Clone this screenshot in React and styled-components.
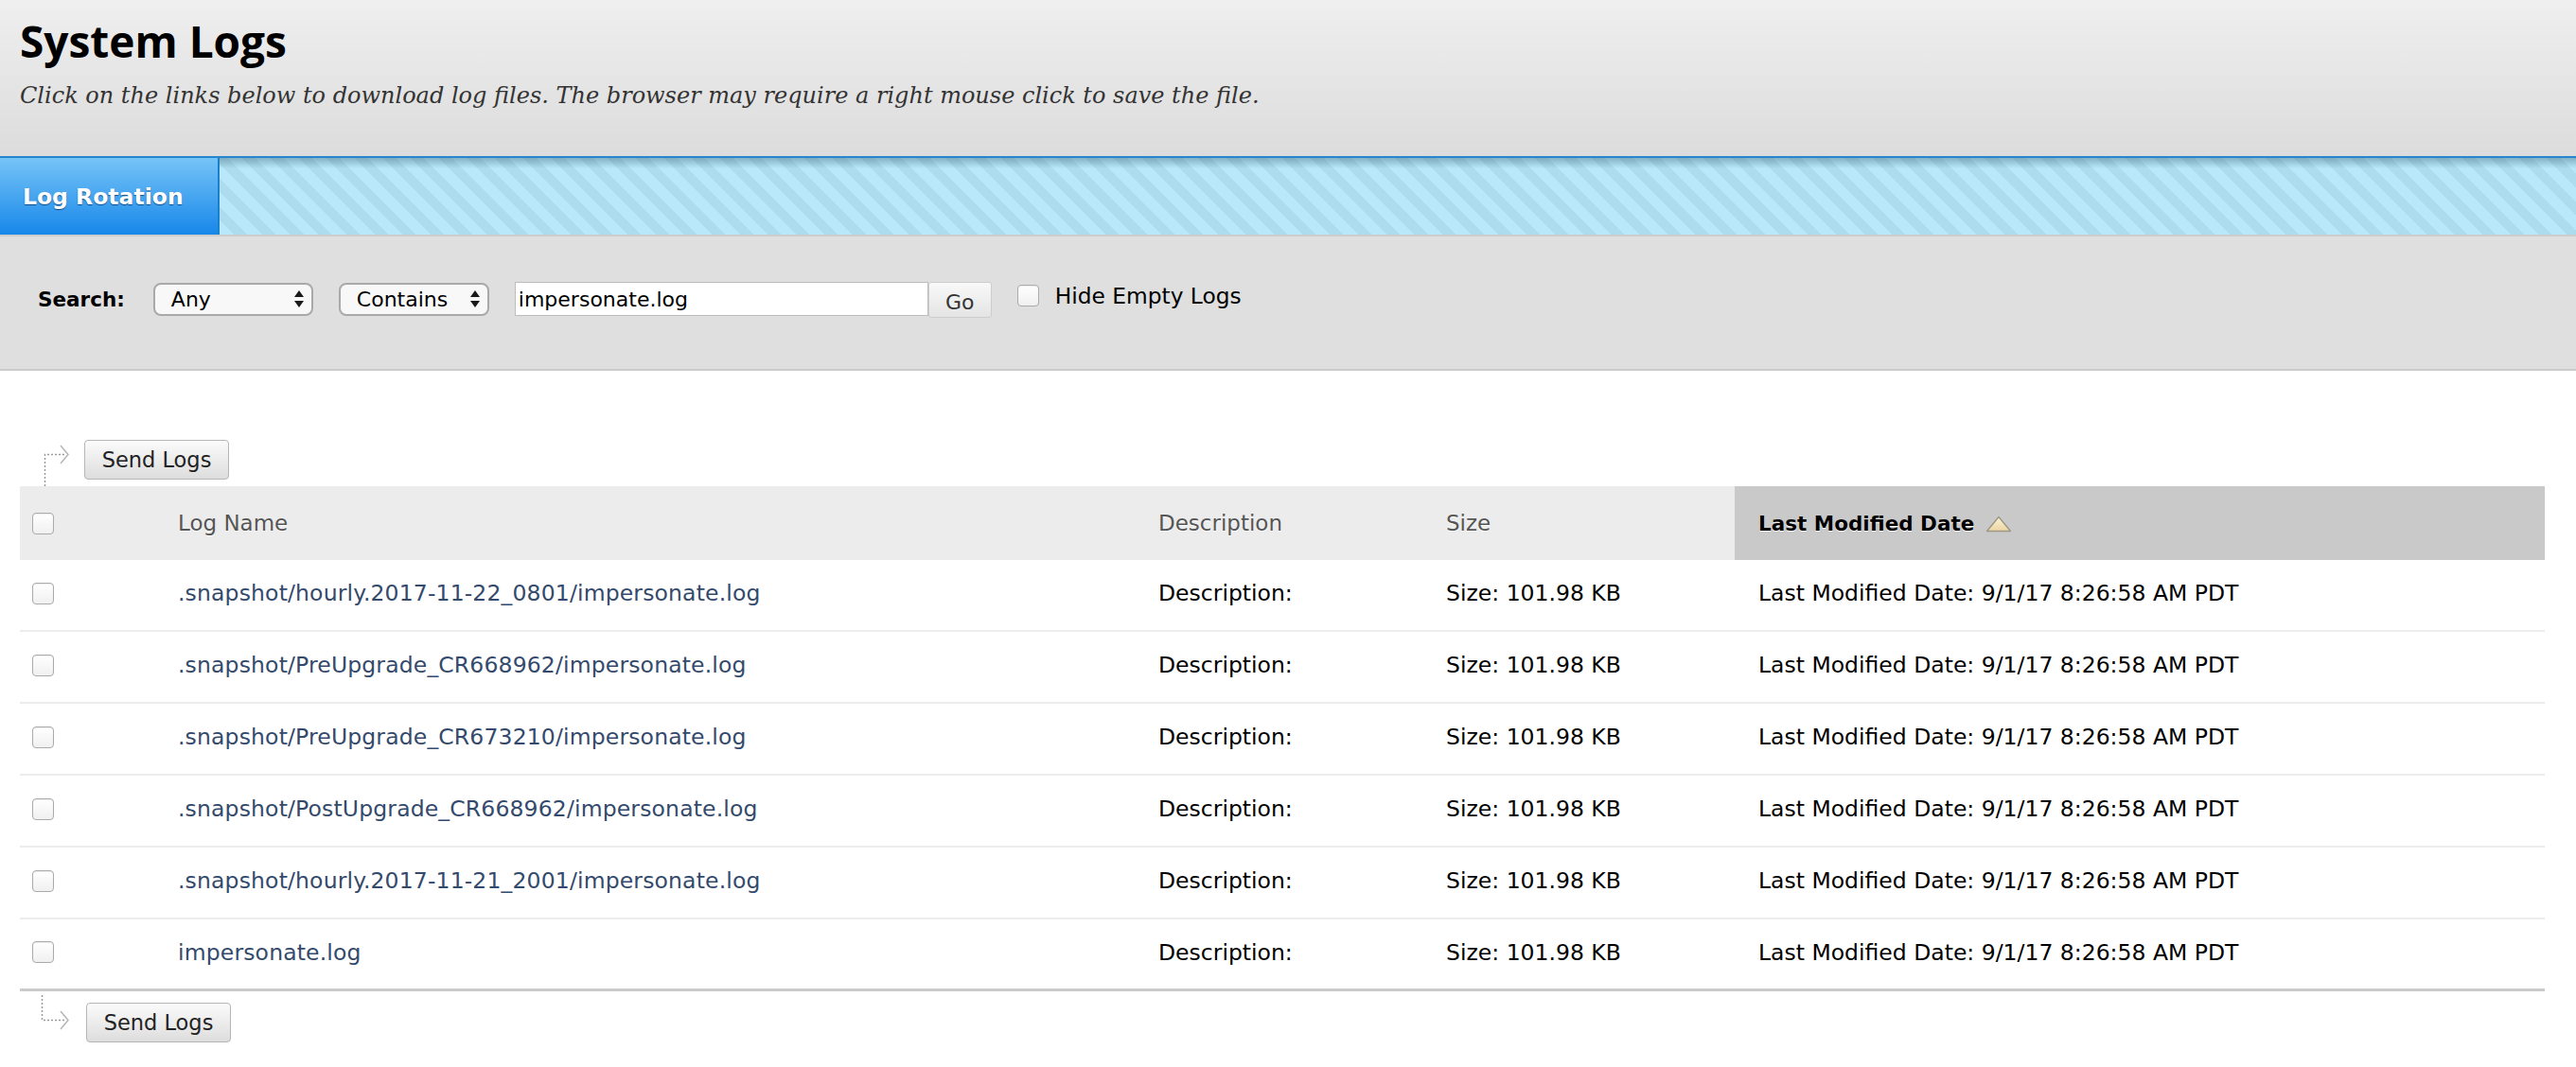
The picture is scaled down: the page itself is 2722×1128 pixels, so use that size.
import React from 'react';
import styled, {createGlobalStyle} from 'styled-components';

const GlobalStyle = createGlobalStyle`
  html, body {
    margin: 0;
    padding: 0;
    background: #fff;
    font-family: "DejaVu Sans", "Open Sans", sans-serif;
    color: #000;
  }
`;

const logs = [
  '.snapshot/hourly.2017-11-22_0801/impersonate.log',
  '.snapshot/PreUpgrade_CR668962/impersonate.log',
  '.snapshot/PreUpgrade_CR673210/impersonate.log',
  '.snapshot/PostUpgrade_CR668962/impersonate.log',
  '.snapshot/hourly.2017-11-21_2001/impersonate.log',
  'impersonate.log',
];

const columns = '167px 1036px 304px 305px 1fr';

const Page = styled.div`
  width: 100%;
`;

const PageHeader = styled.div`
  height: 165px;
  box-sizing: border-box;
  padding: 15px 21px 0;
  background: linear-gradient(#efefef, #dcdcdc);
`;

const Title = styled.h1`
  margin: 0;
  font-family: "Open Sans", sans-serif;
  font-size: 46px;
  line-height: 56px;
  font-weight: 700;
  color: #000;
`;

const Subtitle = styled.p`
  margin: 15px 0 0;
  font-family: "DejaVu Serif", "Liberation Serif", serif;
  font-style: italic;
  font-size: 24px;
  line-height: 30px;
  color: #333;
`;

const TabBar = styled.div`
  display: flex;
  height: 85px;
  box-sizing: border-box;
  border-top: 2px solid #2586cf;
  border-bottom: 2px solid #cdcdcd;
`;

const Tab = styled.div`
  width: 232px;
  display: flex;
  align-items: center;
  padding-left: 24px;
  box-sizing: border-box;
  border-right: 2px solid #1b7fc9;
  background: linear-gradient(#76c4f7, #1787e9);
  color: #fff;
  font-weight: 700;
  font-size: 23.5px;
  text-shadow: 0 1px 1px rgba(0, 40, 90, 0.7);
`;

const TabFill = styled.div`
  flex: 1;
  background:
    linear-gradient(rgba(40, 80, 100, 0.35), rgba(40, 80, 100, 0) 11px),
    repeating-linear-gradient(45deg, #b8e8f9 0 11px, #acdced 11px 21px);
`;

const SearchBar = styled.div`
  height: 142px;
  box-sizing: border-box;
  display: flex;
  align-items: center;
  padding: 0 0 8px 40px;
  background: #dfdfdf;
  border-bottom: 2px solid #cbcbcb;
`;

const SearchLabel = styled.span`
  font-weight: 700;
  font-size: 21.5px;
  margin-right: 30px;
`;

const FakeSelect = styled.div`
  display: flex;
  align-items: center;
  justify-content: space-between;
  width: ${(props) => props.width}px;
  height: 35px;
  box-sizing: border-box;
  padding: 0 8px 0 17px;
  margin-right: ${(props) => props.gap || 0}px;
  border: 2px solid #a9a9a9;
  border-radius: 8px;
  background: #f8f8f8;
  font-size: 22px;
`;

const SearchInput = styled.input`
  width: 437px;
  height: 36px;
  box-sizing: border-box;
  padding: 0 3px;
  border: 1px solid #bdbdbd;
  background: #fff;
  font-family: inherit;
  font-size: 22px;
  color: #000;
  outline: none;
`;

const GoButton = styled.button`
  width: 67px;
  height: 38px;
  margin: 2px 27px 0 0;
  border: 1px solid #cdcdcd;
  border-radius: 3px;
  background: linear-gradient(#f9f9f9, #e4e4e4);
  font-family: inherit;
  font-size: 22px;
  color: #333;
  padding: 4px 0 0;
`;

const CheckBox = styled.span`
  display: inline-block;
  width: 23px;
  height: 23px;
  box-sizing: border-box;
  border: 1px solid #ababab;
  border-radius: 4px;
  background: linear-gradient(#fff, #f0f0f0);
  box-shadow: inset 0 1px 1px rgba(0, 0, 0, 0.08);
`;

const CheckLabel = styled.label`
  display: flex;
  align-items: center;
  gap: 17px;
  margin-top: -8px;
  font-size: 23.3px;
`;

const Content = styled.div`
  padding: 72px 33px 30px 21px;
`;

const ActionBar = styled.div`
  display: flex;
  align-items: ${(props) => (props.bottom ? 'flex-start' : 'flex-end')};
  padding: ${(props) => (props.bottom ? '4px 0 0 21px' : '0 0 0 21px')};
  height: ${(props) => (props.bottom ? '56px' : '50px')};
  box-sizing: border-box;
`;

const SendButton = styled.button`
  width: 153px;
  height: 42px;
  margin: ${(props) => (props.bottom ? '8px 0 0 15px' : '0 0 7px 15px')};
  border: 1px solid #b6b6b6;
  border-radius: 4px;
  background: linear-gradient(#fbfbfb, #dddddd);
  font-family: inherit;
  font-size: 22.5px;
  color: #222;
  padding: 0;
`;

const HeaderRow = styled.div`
  display: grid;
  grid-template-columns: ${columns};
  height: 78px;
  background: #ececec;
`;

const HeadCell = styled.div`
  display: flex;
  align-items: center;
  padding-left: ${(props) => props.pad || 0}px;
  background: ${(props) => (props.sorted ? '#c9c9c9' : 'transparent')};
  color: ${(props) => (props.sorted ? '#000' : '#555')};
  font-weight: ${(props) => (props.sorted ? 700 : 400)};
  font-size: ${(props) => (props.sorted ? 21.5 : 23)}px;
  text-shadow: 0 1px 0 #fff;
`;

const Row = styled.div`
  display: grid;
  grid-template-columns: ${columns};
  height: 76px;
  box-sizing: border-box;
  padding-bottom: 4px;
  border-bottom: ${(props) => (props.last ? '3px solid #cbcbcb' : '2px solid #ececec')};
`;

const Cell = styled.div`
  display: flex;
  align-items: center;
  padding-left: ${(props) => props.pad || 0}px;
  font-size: 23.5px;
  color: #000;
`;

const LogLink = styled.a`
  color: #344a6c;
  text-decoration: none;
  letter-spacing: 0.15px;
`;

const SortArrow = styled.svg`
  margin-left: 12px;
  margin-top: 2px;
`;

const SelectArrows = () => (
  <svg width="10" height="18" viewBox="0 0 10 18">
    <path d="M0 7 L5 0 L10 7 Z M0 11 L10 11 L5 18 Z" fill="#1a1a1a" />
  </svg>
);

const TopArrow = () => (
  <svg width="32" height="44" viewBox="0 0 32 44">
    <path d="M5.5 44 V10.5 H28" stroke="#9a9a9a" strokeWidth="1.5" strokeDasharray="2 2" fill="none" />
    <path d="M22 1 L30 10.5 L22 20" stroke="#b5b5b5" strokeWidth="1.5" fill="none" />
  </svg>
);

const BottomArrow = () => (
  <svg width="34" height="38" viewBox="0 0 34 38">
    <path d="M2.5 0 V26.5 H28" stroke="#9a9a9a" strokeWidth="1.5" strokeDasharray="2 2" fill="none" />
    <path d="M22 17 L30 26.5 L22 36" stroke="#b5b5b5" strokeWidth="1.5" fill="none" />
  </svg>
);

const App = () => {
  return (
    <Page>
      <GlobalStyle />
      <PageHeader>
        <Title>System Logs</Title>
        <Subtitle>
          Click on the links below to download log files. The browser may
          require a right mouse click to save the file.
        </Subtitle>
      </PageHeader>
      <TabBar>
        <Tab>Log Rotation</Tab>
        <TabFill />
      </TabBar>
      <SearchBar>
        <SearchLabel>Search:</SearchLabel>
        <FakeSelect width={169} gap={27}>
          Any
          <SelectArrows />
        </FakeSelect>
        <FakeSelect width={159} gap={27}>
          Contains
          <SelectArrows />
        </FakeSelect>
        <SearchInput defaultValue="impersonate.log" />
        <GoButton>Go</GoButton>
        <CheckLabel>
          <CheckBox />
          Hide Empty Logs
        </CheckLabel>
      </SearchBar>
      <Content>
        <ActionBar>
          <TopArrow />
          <SendButton>Send Logs</SendButton>
        </ActionBar>
        <HeaderRow>
          <HeadCell pad={13}>
            <CheckBox />
          </HeadCell>
          <HeadCell>Log Name</HeadCell>
          <HeadCell>Description</HeadCell>
          <HeadCell>Size</HeadCell>
          <HeadCell sorted pad={25}>
            Last Modified Date
            <SortArrow width="28" height="18" viewBox="0 0 28 18">
              <defs>
                <linearGradient id="sortFill" x1="0" y1="0" x2="0" y2="1">
                  <stop offset="0" stopColor="#fcf2d6" />
                  <stop offset="1" stopColor="#ebd6a0" />
                </linearGradient>
              </defs>
              <path d="M14 1.5 L26.5 16.5 H1.5 Z" fill="url(#sortFill)" stroke="#9d9888" strokeWidth="1.4" strokeLinejoin="round" />
            </SortArrow>
          </HeadCell>
        </HeaderRow>
        {logs.map((name, i) => (
          <Row key={name} last={i === logs.length - 1}>
            <Cell pad={13}>
              <CheckBox />
            </Cell>
            <Cell>
              <LogLink href="#">{name}</LogLink>
            </Cell>
            <Cell>Description:</Cell>
            <Cell>Size: 101.98 KB</Cell>
            <Cell pad={25}>Last Modified Date: 9/1/17 8:26:58 AM PDT</Cell>
          </Row>
        ))}
        <ActionBar bottom>
          <BottomArrow />
          <SendButton bottom>Send Logs</SendButton>
        </ActionBar>
      </Content>
    </Page>
  );
};

export default App;
